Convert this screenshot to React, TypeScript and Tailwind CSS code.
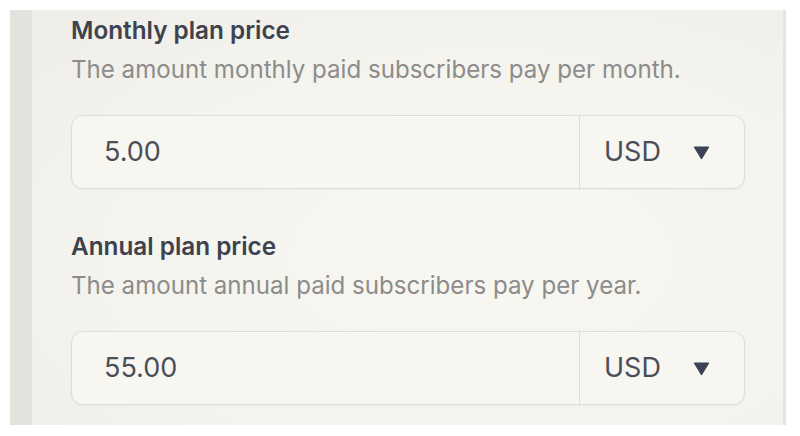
import React from "react";

function Caret() {
  return (
    <svg width="17" height="14" viewBox="0 0 17 14" className="block">
      <path d="M1 1.5 Q0.5 0.5 1.8 0.5 L15.2 0.5 Q16.5 0.5 16 1.5 L9.3 12.6 Q8.5 13.8 7.7 12.6 Z" fill="#3b4252" />
    </svg>
  );
}

function PriceField({ label, desc, value }: { label: string; desc: string; value: string }) {
  return (
    <div className="flex flex-col">
      <div className="text-[24.3px] leading-[32px] font-semibold text-[#3d424e]">{label}</div>
      <div className="mt-[8px] text-[24.1px] leading-[32px] text-[#8c8c8a]">{desc}</div>
      <div className="mt-[29px] flex h-[74px] rounded-[12px] border border-[#dddcd5] bg-[#f7f6f1] shadow-[0_1px_2px_rgba(0,0,0,0.04)]">
        <div className="flex flex-1 items-center pl-[32px] text-[27px] text-[#4a4e57]">{value}</div>
        <div className="flex w-[165px] items-center border-l border-[#dddcd5] pl-[24px] text-[27px] text-[#4a4e57]">
          <span>USD</span>
          <span className="ml-[32px] mt-[2px]">
            <Caret />
          </span>
        </div>
      </div>
    </div>
  );
}

export default function App() {
  return (
    <div
      className="w-[800px] h-[436px] overflow-hidden bg-white pt-[10px] pl-[10px] pr-[14px] pb-[11px]"
      style={{ fontFamily: "Inter, 'Noto Sans', sans-serif" }}
    >
      <div className="flex h-full">
        <div className="w-[22px] bg-[#e3e2dd]" />
        <div className="flex-1 border-r-[3px] border-[#e6e5e0] bg-[radial-gradient(ellipse_at_60%_60%,#f8f7f2_0%,#f4f3ed_60%,#eeede7_100%)] pl-[39px] pr-[38px] pt-[4px]">
          <PriceField
            label="Monthly plan price"
            desc="The amount monthly paid subscribers pay per month."
            value="5.00"
          />
          <div className="mt-[41px]">
            <PriceField
              label="Annual plan price"
              desc="The amount annual paid subscribers pay per year."
              value="55.00"
            />
          </div>
        </div>
      </div>
    </div>
  );
}
